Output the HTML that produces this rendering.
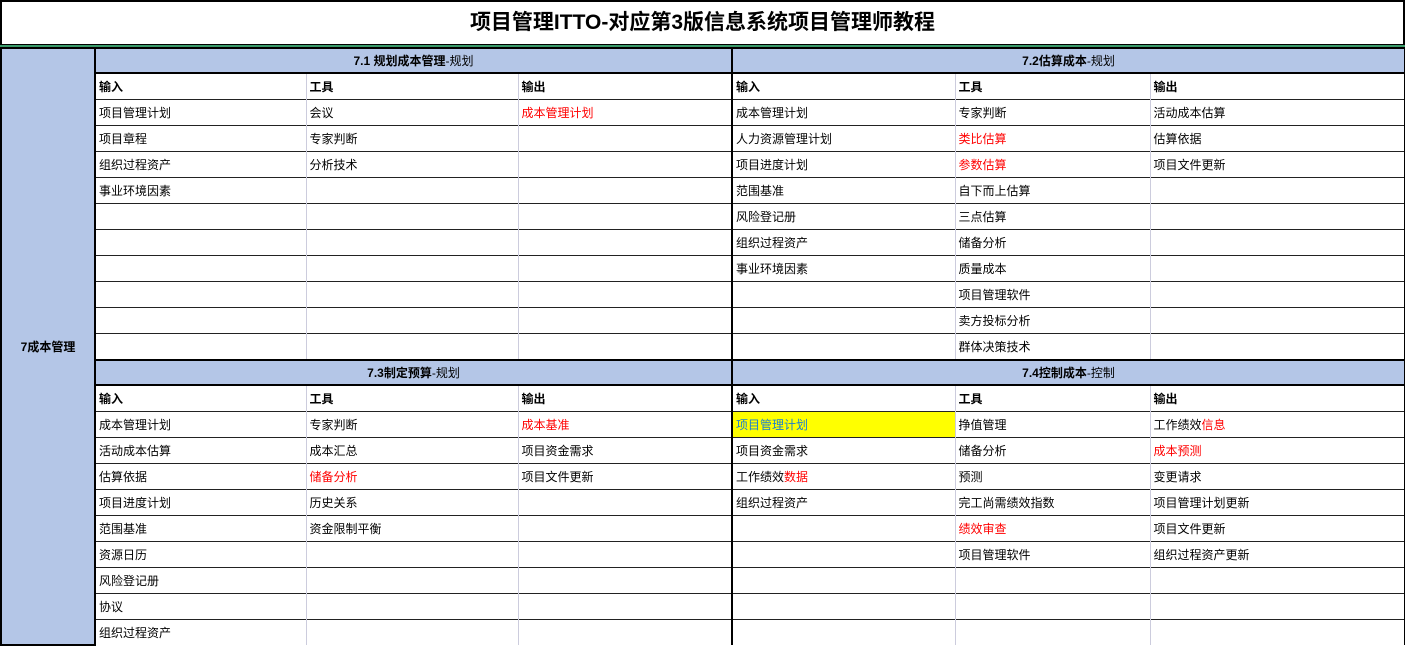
<!DOCTYPE html>
<html><head><meta charset="utf-8"><style>
body{margin:0;width:1405px;height:645px;overflow:hidden;background:#fff;font-family:"Liberation Sans","Noto Sans CJK SC",sans-serif;font-size:12px;color:#000}
.title{position:absolute;left:0;top:0;width:1401px;height:42px;border:2px solid #000;text-align:center;line-height:42px;font-size:21px;font-weight:bold}
.g{position:absolute;left:0;top:45px;width:1405px;height:2px;background:#3a9a6a}
table{position:absolute;left:0;top:47px;border-collapse:collapse;table-layout:fixed;width:1404px;border-right:2px solid #000}
td{border-top:1px solid #222;border-left:1px solid #ccd;padding:0 0 0 3px;height:25px;white-space:nowrap;overflow:hidden}
.h td{background:#b4c6e7;text-align:center;font-weight:bold;border-top:2px solid #000;border-bottom:2px solid #000;height:23px;padding:0}
.l td{font-weight:bold}
td.s{border-left:2px solid #000}
td.side{background:#b4c6e7;border:2px solid #000;text-align:center;font-weight:bold;padding:0}
.r{color:#f00}.n{font-weight:normal}
.y{background:#ff0;color:#1a7fd0}
</style></head><body>
<div class="title">项目管理ITTO-对应第3版信息系统项目管理师教程</div>
<div class="g"></div>
<table>
<colgroup><col style="width:94px"><col style="width:211px"><col style="width:212px"><col style="width:214px"><col style="width:223px"><col style="width:195px"><col style="width:255px"></colgroup>
<tr class="h"><td class="side" rowspan="23">7成本管理</td><td colspan="3" class="s">7.1 规划成本管理<span class="n">-规划</span></td><td colspan="3" class="s">7.2估算成本<span class="n">-规划</span></td></tr>
<tr class="l"><td class="s">输入</td><td>工具</td><td>输出</td><td class="s">输入</td><td>工具</td><td>输出</td></tr>
<tr><td class="s">项目管理计划</td><td>会议</td><td class="r">成本管理计划</td><td class="s">成本管理计划</td><td>专家判断</td><td>活动成本估算</td></tr>
<tr><td class="s">项目章程</td><td>专家判断</td><td></td><td class="s">人力资源管理计划</td><td class="r">类比估算</td><td>估算依据</td></tr>
<tr><td class="s">组织过程资产</td><td>分析技术</td><td></td><td class="s">项目进度计划</td><td class="r">参数估算</td><td>项目文件更新</td></tr>
<tr><td class="s">事业环境因素</td><td></td><td></td><td class="s">范围基准</td><td>自下而上估算</td><td></td></tr>
<tr><td class="s"></td><td></td><td></td><td class="s">风险登记册</td><td>三点估算</td><td></td></tr>
<tr><td class="s"></td><td></td><td></td><td class="s">组织过程资产</td><td>储备分析</td><td></td></tr>
<tr><td class="s"></td><td></td><td></td><td class="s">事业环境因素</td><td>质量成本</td><td></td></tr>
<tr><td class="s"></td><td></td><td></td><td class="s"></td><td>项目管理软件</td><td></td></tr>
<tr><td class="s"></td><td></td><td></td><td class="s"></td><td>卖方投标分析</td><td></td></tr>
<tr><td class="s"></td><td></td><td></td><td class="s"></td><td>群体决策技术</td><td></td></tr>
<tr class="h"><td colspan="3" class="s">7.3制定预算<span class="n">-规划</span></td><td colspan="3" class="s">7.4控制成本<span class="n">-控制</span></td></tr>
<tr class="l"><td class="s">输入</td><td>工具</td><td>输出</td><td class="s">输入</td><td>工具</td><td>输出</td></tr>
<tr><td class="s">成本管理计划</td><td>专家判断</td><td class="r">成本基准</td><td class="s y">项目管理计划</td><td>挣值管理</td><td>工作绩效<span class="r">信息</span></td></tr>
<tr><td class="s">活动成本估算</td><td>成本汇总</td><td>项目资金需求</td><td class="s">项目资金需求</td><td>储备分析</td><td class="r">成本预测</td></tr>
<tr><td class="s">估算依据</td><td class="r">储备分析</td><td>项目文件更新</td><td class="s">工作绩效<span class="r">数据</span></td><td>预测</td><td>变更请求</td></tr>
<tr><td class="s">项目进度计划</td><td>历史关系</td><td></td><td class="s">组织过程资产</td><td>完工尚需绩效指数</td><td>项目管理计划更新</td></tr>
<tr><td class="s">范围基准</td><td>资金限制平衡</td><td></td><td class="s"></td><td class="r">绩效审查</td><td>项目文件更新</td></tr>
<tr><td class="s">资源日历</td><td></td><td></td><td class="s"></td><td>项目管理软件</td><td>组织过程资产更新</td></tr>
<tr><td class="s">风险登记册</td><td></td><td></td><td class="s"></td><td></td><td></td></tr>
<tr><td class="s">协议</td><td></td><td></td><td class="s"></td><td></td><td></td></tr>
<tr><td class="s">组织过程资产</td><td></td><td></td><td class="s"></td><td></td><td></td></tr>
</table>
</body></html>
